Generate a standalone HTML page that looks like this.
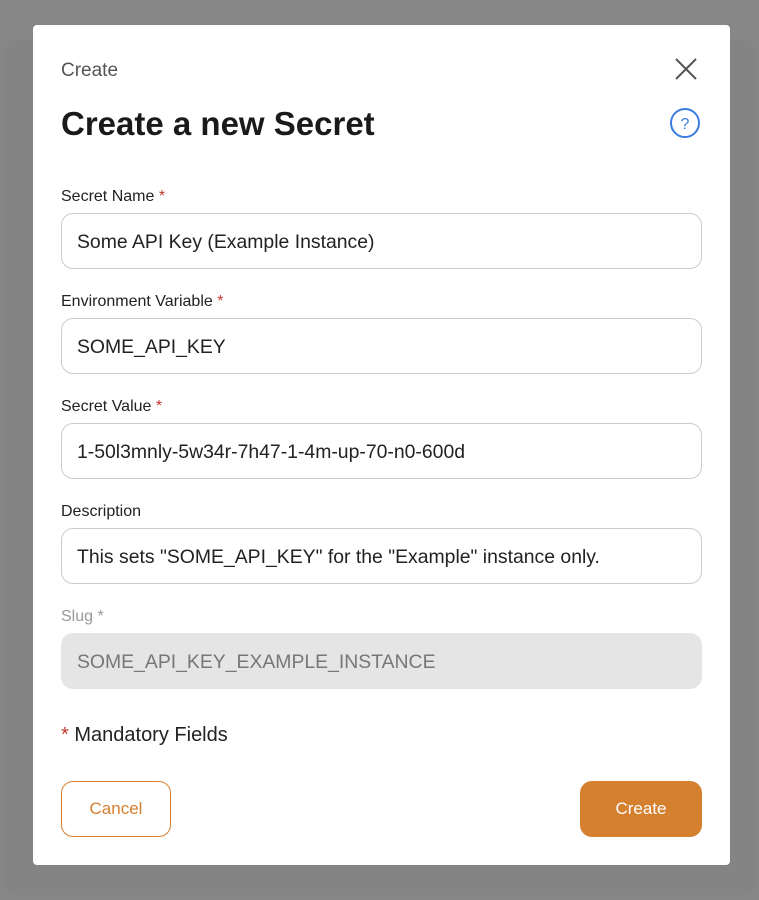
<!DOCTYPE html>
<html><head><style>
body{margin:0;width:759px;height:900px;background:#878787;font-family:"Liberation Sans",sans-serif;position:relative;overflow:hidden}
.bgpanel{position:absolute;left:4px;top:40px;width:752px;height:855px;background:#848484;border-radius:12px}
.modal{position:absolute;left:33px;top:25px;width:697px;height:840px;background:#fff;border-radius:4px}
.abs{position:absolute}
.lbl{position:absolute;left:28px;font-size:16px;color:#222}
.req{color:#c0392b}
.inp{position:absolute;left:28px;height:54px;border:1px solid #ccc;border-radius:12px;font-size:19.4px;color:#222;line-height:56px;padding-left:15px;box-sizing:content-box;width:624px}
</style></head><body>
<div class="bgpanel"></div>
<div class="modal">
<div class="abs" style="left:28px;top:35px;font-size:19px;color:#555">Create</div>
<svg class="abs" style="left:642px;top:33px" width="22" height="22" viewBox="0 0 22 22"><path d="M1 1L21 21M21 1L1 21" stroke="#555" stroke-width="2" fill="none"/></svg>
<div class="abs" style="left:28px;top:80px;font-size:33px;font-weight:bold;color:#1a1a1a">Create a new Secret</div>
<svg class="abs" style="left:636px;top:82px" width="32" height="32" viewBox="0 0 32 32"><circle cx="16" cy="16" r="14" stroke="#3b7de0" stroke-width="2" fill="none"/><text x="16" y="22" font-size="16" text-anchor="middle" fill="#3b7de0" font-family="Liberation Sans">?</text></svg>
<div class="lbl" style="top:163px">Secret Name <span class="req">*</span></div>
<div class="inp" style="top:188px">Some API Key (Example Instance)</div>
<div class="lbl" style="top:268px">Environment Variable <span class="req">*</span></div>
<div class="inp" style="top:293px">SOME_API_KEY</div>
<div class="lbl" style="top:373px">Secret Value <span class="req">*</span></div>
<div class="inp" style="top:398px">1-50l3mnly-5w34r-7h47-1-4m-up-70-n0-600d</div>
<div class="lbl" style="top:478px">Description</div>
<div class="inp" style="top:503px">This sets "SOME_API_KEY" for the "Example" instance only.</div>
<div class="lbl" style="top:583px;color:#999">Slug *</div>
<div class="inp" style="top:608px;background:#e5e5e5;border-color:#e5e5e5;color:#777">SOME_API_KEY_EXAMPLE_INSTANCE</div>
<div class="abs" style="left:28px;top:699px;font-size:20px;color:#222"><span class="req">*</span> Mandatory Fields</div>
<div class="abs" style="left:28px;top:756px;width:108px;height:54px;border:1px solid #d4802f;border-radius:12px;color:#d4802f;font-size:17px;text-align:center;line-height:54px">Cancel</div>
<div class="abs" style="left:547px;top:756px;width:122px;height:56px;background:#d4802f;border-radius:12px;color:#fff;font-size:17px;text-align:center;line-height:56px">Create</div>
</div>
</body></html>
